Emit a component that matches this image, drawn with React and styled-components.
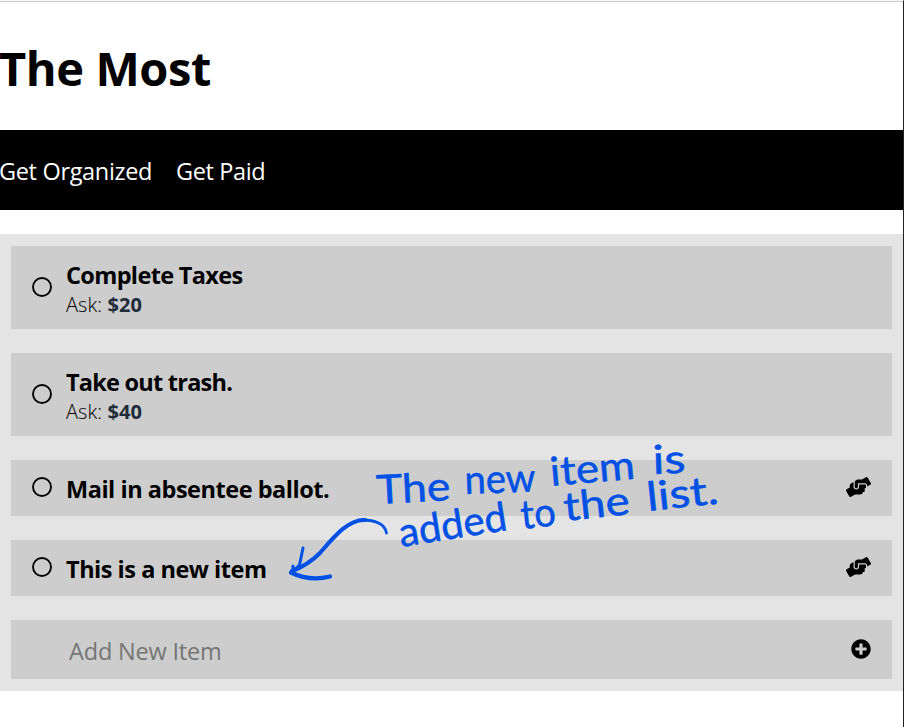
import React from "react";
import styled, { createGlobalStyle } from "styled-components";
import { FaHandsHelping, FaPlusCircle } from "react-icons/fa";

const GlobalStyle = createGlobalStyle`
  *, *::before, *::after { box-sizing: border-box; }
  html, body { margin: 0; background: #fff; overflow: hidden; }
  body { font-family: "Open Sans", "Noto Sans", sans-serif; color: #000; }
`;

const Page = styled.div`
  position: relative;
  height: 727px;
  border-top: 1px solid #f7f7f7;
  border-right: 1px solid #202020;
  overflow: hidden;
`;

const Header = styled.header`
  height: 129px;
  padding-top: 34px;
  border-top: 1px solid #cbcbcb;
`;

const Title = styled.h1`
  margin: 0 0 0 -1px;
  font-size: 47px;
  line-height: 64px;
  font-weight: 700;
  letter-spacing: -0.42px;
  white-space: nowrap;
`;

const Nav = styled.nav`
  display: flex;
  align-items: center;
  gap: 24px;
  height: 80px;
  padding-top: 2px;
  background: #000;
`;

const NavLink = styled.a`
  position: relative;
  left: -1px;
  color: #fff;
  font-size: 23.5px;
  line-height: 32px;
  letter-spacing: ${(p) => p.$spacing}px;
  white-space: nowrap;
`;

const List = styled.main`
  display: flex;
  flex-direction: column;
  gap: 24px;
  margin-top: 24px;
  padding: 12px 11px;
  background: #e4e4e4;
`;

const Card = styled.section`
  display: flex;
  align-items: center;
  height: ${(p) => p.$height}px;
  padding: 0 21px;
  background: #cdcdcd;
`;

const Check = styled.svg`
  flex: none;
  width: 20px;
  height: 20px;
  margin: 0 14px 2px 0;
`;

const Details = styled.div`
  flex: 1;
  padding-top: ${(p) => p.$top}px;
`;

const Name = styled.div`
  font-size: 23.5px;
  line-height: 32px;
  font-weight: 700;
  letter-spacing: ${(p) => p.$spacing}px;
  white-space: nowrap;
`;

const Ask = styled.div`
  font-size: 20px;
  line-height: 27px;
  font-weight: 300;
  letter-spacing: 0.1px;
  white-space: nowrap;
`;

const Amount = styled.strong`
  color: #202b3b;
  font-weight: 700;
`;

const HelpIcon = styled(FaHandsHelping)`
  flex: none;
  width: 25px;
  height: 20px;
  margin-bottom: 2px;
`;

const AddIcon = styled(FaPlusCircle)`
  flex: none;
  width: 20px;
  height: 20px;
  margin-bottom: 2px;
`;

const NewItem = styled.input`
  flex: 1;
  min-width: 0;
  height: 40px;
  margin-left: 37px;
  padding: 3px 0 0;
  border: 0;
  outline: 0;
  background: transparent;
  font: 400 23.5px/32px "Open Sans", sans-serif;
  letter-spacing: -0.18px;
  &::placeholder { color: #757575; opacity: 1; }
`;

const Note = styled.svg`
  position: absolute;
  left: 280px;
  top: 429px;
  width: 450px;
  height: 160px;
  pointer-events: none;
`;

const Word = styled.text`
  font-family: Lato, sans-serif;
  font-size: 40px;
  font-weight: 400;
  fill: #0050e6;
  stroke: #0050e6;
  stroke-width: 0.5px;
`;

const items = [
  { name: "Complete Taxes", ask: "$20", spacing: -0.65 },
  { name: "Take out trash.", ask: "$40", spacing: -0.76 },
  { name: "Mail in absentee ballot.", spacing: -0.47 },
  { name: "This is a new item", spacing: -0.48 },
];

const words = [
  { text: "The", x: 377, y: 504, angle: -3, width: 74 },
  { text: "new", x: 465, y: 494, angle: -2, width: 71 },
  { text: "item", x: 551, y: 486, angle: -5, width: 85 },
  { text: "is", x: 653, y: 474, angle: -2, width: 33 },
  { text: "added", x: 401, y: 547, angle: -9, width: 109 },
  { text: "to", x: 522, y: 529, angle: -6, width: 35 },
  { text: "the", x: 565, y: 521, angle: -6, width: 66 },
  { text: "list.", x: 648, y: 511, angle: -6, width: 72 },
];

function Item({ name, ask, spacing }) {
  return (
    <Card $height={ask ? 83 : 56}>
      <Check viewBox="0 0 20 20">
        <circle cx="10" cy="10" r="9" fill="none" stroke="#000" strokeWidth="1.9" />
      </Check>
      <Details $top={ask ? 2 : 1}>
        <Name $spacing={spacing}>{name}</Name>
        {ask && <Ask>Ask: <Amount>{ask}</Amount></Ask>}
      </Details>
      {!ask && <HelpIcon />}
    </Card>
  );
}

export default function App() {
  return (
    <Page>
      <GlobalStyle />
      <Header>
        <Title>The Most</Title>
      </Header>
      <Nav>
        <NavLink $spacing={-0.33}>Get Organized</NavLink>
        <NavLink $spacing={-0.4}>Get Paid</NavLink>
      </Nav>
      <List>
        {items.map((item) => <Item key={item.name} {...item} />)}
        <Card $height={59}>
          <NewItem placeholder="Add New Item" />
          <AddIcon />
        </Card>
      </List>
      <Note viewBox="280 430 450 160">
        {words.map((w) => (
          <Word
            key={w.text}
            x={w.x}
            y={w.y}
            textLength={w.width}
            lengthAdjust="spacingAndGlyphs"
            transform={`rotate(${w.angle} ${w.x} ${w.y})`}
          >
            {w.text}
          </Word>
        ))}
        <g fill="none" stroke="#0050e6" strokeLinecap="round" strokeLinejoin="round">
          <path d="M386.5 533 C385 524 375 520 362 520" strokeWidth="2.8" />
          <path d="M365 520 C348 519 333 538 320 553 C312 561 303 567 292 571" strokeWidth="4" />
          <path d="M303 548 L299.500 565 L293 571 L293 566" strokeWidth="3" />
          <path d="M291 572.500 C302 578 316 580 330 576.500" strokeWidth="4.2" />
        </g>
      </Note>
    </Page>
  );
}
